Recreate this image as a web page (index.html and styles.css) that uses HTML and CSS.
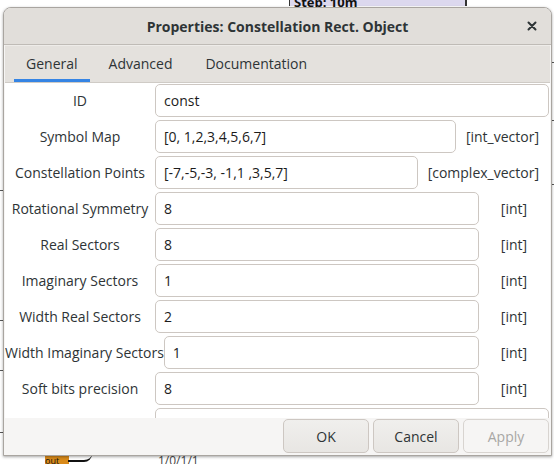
FILE: index.html
```html
<!DOCTYPE html>
<html>
<head>
<meta charset="utf-8">
<link rel="stylesheet" href="styles.css">
</head>
<body>
<div class="desk">
  <div class="bg-step">Step: 10m</div>
  <div class="bg-line bl1"></div>
  <div class="bg-line bl2"></div>
  <div class="bg-line bl3"></div>
  <div class="bg-line bl4"></div>
  <div class="bg-line br1"></div>
  <div class="bg-line br2"></div>
  <div class="bg-line br3"></div>
  <div class="bg-out">out</div>
  <div class="bg-wire"></div>
  <div class="bg-text">1/0/1/1</div>

  <div class="dialog">
    <div class="titlebar">
      <span class="title">Properties: Constellation Rect. Object</span>
      <svg class="close" width="10" height="10" viewBox="0 0 10 10"><path d="M1.5 1.5 L8.5 8.5 M8.5 1.5 L1.5 8.5" stroke="#2e3436" stroke-width="2" stroke-linecap="round"/></svg>
    </div>
    <div class="tabs">
      <div class="tab active">General</div>
      <div class="tab">Advanced</div>
      <div class="tab">Documentation</div>
    </div>
    <div class="content">
      <div class="row"><div class="lbl">ID</div><div class="inp">const</div></div>
      <div class="row"><div class="lbl">Symbol Map</div><div class="inp">[0, 1,2,3,4,5,6,7]</div><div class="typ">[int_vector]</div></div>
      <div class="row"><div class="lbl">Constellation Points</div><div class="inp">[-7,-5,-3, -1,1 ,3,5,7]</div><div class="typ">[complex_vector]</div></div>
      <div class="row"><div class="lbl">Rotational Symmetry</div><div class="inp">8</div><div class="typ">[int]</div></div>
      <div class="row"><div class="lbl">Real Sectors</div><div class="inp">8</div><div class="typ">[int]</div></div>
      <div class="row"><div class="lbl">Imaginary Sectors</div><div class="inp">1</div><div class="typ">[int]</div></div>
      <div class="row"><div class="lbl">Width Real Sectors</div><div class="inp">2</div><div class="typ">[int]</div></div>
      <div class="row"><div class="lbl">Width Imaginary Sectors</div><div class="inp">1</div><div class="typ">[int]</div></div>
      <div class="row"><div class="lbl">Soft bits precision</div><div class="inp">8</div><div class="typ">[int]</div></div>
      <div class="row"><div class="lbl"></div><div class="inp"></div></div>
    </div>
    <div class="footer">
      <div class="btn">OK</div>
      <div class="btn">Cancel</div>
      <div class="btn disabled">Apply</div>
    </div>
  </div>
</div>
</body>
</html>
```

FILE: styles.css
```css
html, body {
  margin: 0;
  padding: 0;
}
body {
  width: 554px;
  height: 464px;
  overflow: hidden;
  background: #ffffff;
  font-family: "Open Sans", "Noto Sans", sans-serif;
  font-size: 14px;
  color: #2e3436;
}
.desk {
  position: relative;
  width: 554px;
  height: 464px;
  overflow: hidden;
  background: #ffffff;
}
.bg-step {
  position: absolute;
  left: 289px;
  top: -22px;
  width: 178px;
  height: 28px;
  background: #dcd8ee;
  border-left: 1px solid #333;
  border-right: 2px solid #333;
  font-size: 13px;
  font-weight: bold;
  line-height: 14px;
  padding: 17px 0 0 4px;
  box-sizing: border-box;
  color: #111;
}
.bg-line {
  position: absolute;
  height: 1px;
  background: #555;
}
.bl1 { left: 0; top: 190px; width: 6px; }
.bl2 { left: 0; top: 320px; width: 6px; }
.bl3 { left: 0; top: 370px; width: 6px; }
.bl4 { left: 0; top: 432px; width: 6px; }
.br1 { right: 0; top: 62px; width: 6px; }
.br2 { right: 0; top: 120px; width: 6px; }
.br3 { right: 0; top: 184px; width: 6px; }
.bg-out {
  position: absolute;
  left: 45px;
  top: 455px;
  width: 24px;
  height: 12px;
  background: #d98a1a;
  font-size: 9px;
  line-height: 12px;
  color: #111;
}
.bg-wire {
  position: absolute;
  left: 68px;
  top: 454px;
  width: 24px;
  height: 6px;
  border-bottom: 2px solid #111;
  border-radius: 0 0 12px 0;
}
.bg-text {
  position: absolute;
  left: 158px;
  top: 452px;
  font-size: 12px;
  color: #444;
}

.dialog {
  position: absolute;
  left: 3px;
  top: 7px;
  width: 549px;
  height: 449px;
  display: flex;
  flex-direction: column;
  background: #f6f5f4;
  border: 1px solid #a9a5a0;
  border-radius: 8px 8px 0 0;
  box-shadow: 0 1px 3px rgba(0, 0, 0, 0.35);
  box-sizing: border-box;
  overflow: hidden;
}
.titlebar {
  flex: none;
  height: 36px;
  background: #e1deda;
  border-bottom: 1px solid #bfbbb6;
  display: flex;
  align-items: center;
  justify-content: center;
  position: relative;
}
.title {
  font-weight: bold;
  font-size: 14px;
  color: #2e3436;
}
.close {
  position: absolute;
  right: 14px;
  top: 13px;
}
.tabs {
  flex: none;
  height: 38px;
  margin: 0 1px;
  background: #e4e1dd;
  border-top: 1px solid #eeece9;
  border-bottom: 1px solid #cfcbc6;
  display: flex;
  align-items: stretch;
  padding-left: 9px;
  box-sizing: border-box;
}
.tab {
  padding: 0 14px;
  display: flex;
  align-items: center;
  padding-top: 2px;
  color: #2e3436;
  border-bottom: 3px solid transparent;
  margin-right: 5px;
}
.tab.active {
  border-bottom-color: #3584e4;
  padding: 2px 12px 0 12px;
}
.content {
  flex: 1;
  background: #ffffff;
  margin: 0 1px;
  padding: 1px 1px 0 0;
  display: flex;
  flex-direction: column;
  gap: 3px;
  overflow: hidden;
}
.row {
  flex: none;
  display: flex;
  align-items: center;
  height: 33px;
}
.lbl {
  flex: none;
  min-width: 150px;
  text-align: center;
  white-space: nowrap;
  color: #2e3436;
}
.inp {
  flex: 1;
  height: 33px;
  box-sizing: border-box;
  border: 1px solid #cdc7c2;
  border-radius: 5px;
  background: #ffffff;
  padding: 0 8px;
  display: flex;
  align-items: center;
  white-space: nowrap;
  overflow: hidden;
  color: #1c1c1c;
}
.typ {
  flex: none;
  min-width: 70px;
  box-sizing: border-box;
  padding: 0 10px;
  text-align: center;
  white-space: nowrap;
  color: #2e3436;
}
.footer {
  flex: none;
  height: 37px;
  background: #f6f5f4;
  display: flex;
  justify-content: flex-end;
  align-items: flex-start;
  gap: 4px;
  padding: 1px 2px 0 0;
  box-sizing: border-box;
}
.btn {
  width: 86px;
  height: 34px;
  box-sizing: border-box;
  border: 1px solid #cdc7c2;
  border-radius: 5px;
  background: linear-gradient(#f0efed, #e8e6e3);
  display: flex;
  align-items: center;
  justify-content: center;
  color: #2e3436;
}
.btn.disabled {
  background: #f6f5f4;
  border-color: #d8d4d0;
  color: #a8a7a4;
}
```
